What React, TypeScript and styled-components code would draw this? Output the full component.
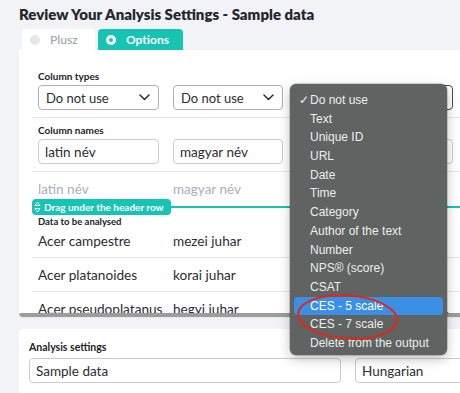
import * as React from "react";
import styled, { createGlobalStyle } from "styled-components";

const GlobalStyle = createGlobalStyle`
    html, body {
        margin: 0;
        overflow: hidden;
        background-color: #f2f3f7;
    }
    body {
        font-family: "Lato", "Noto Sans", sans-serif;
        color: #2b2d33;
    }
`;

const teal = "#17c3b2";
const columns = "121px 110px 156px 140px";

const Page = styled.div`
    position: relative;
    width: 620px;
    height: 393px;
    padding: 4px 0 0 19px;
    box-sizing: border-box;
`;

const Title = styled.h1`
    margin: 0 0 5px;
    font-size: 15px;
    line-height: 20px;
    font-weight: 800;
    color: #26282e;
`;

const Tabs = styled.div`
    display: flex;
    gap: 3px;
    margin-left: 3px;
    position: relative;
    z-index: 1;
`;

const Tab = styled.div<{ $active?: boolean; $width: number }>`
    display: flex;
    align-items: center;
    gap: 10px;
    width: ${(p) => p.$width}px;
    height: 21px;
    padding-left: 8px;
    box-sizing: border-box;
    border-radius: 4px 4px 0 0;
    background-color: ${(p) => (p.$active ? teal : "#ffffff")};
    color: ${(p) => (p.$active ? "#ffffff" : "#a3a8b3")};
    font-size: 12px;
    font-weight: ${(p) => (p.$active ? 700 : 600)};
`;

const Radio = styled.span<{ $active?: boolean }>`
    width: 10px;
    height: 10px;
    border-radius: 50%;
    box-sizing: border-box;
    background-color: ${(p) => (p.$active ? "#ffffff" : "#e5e7ec")};
    display: flex;
    align-items: center;
    justify-content: center;
    &::after {
        content: "";
        display: ${(p) => (p.$active ? "block" : "none")};
        width: 4px;
        height: 4px;
        border-radius: 50%;
        background-color: ${teal};
    }
`;

const Card = styled.div`
    background-color: #ffffff;
    border-radius: 0 4px 4px 4px;
    overflow: hidden;
    box-shadow: 0 1px 2px rgba(30, 40, 60, 0.05);
`;

const Viewport = styled.div`
    height: 243px;
    padding: 20px 0 0 13px;
    overflow: hidden;
`;

const Section = styled.div<{ $divider?: boolean; $top?: number }>`
    padding: ${(p) => p.$top ?? 0}px 6px ${(p) => (p.$divider ? 7 : 0)}px;
    border-bottom: ${(p) => (p.$divider ? "1px solid #e3e6ec" : "none")};
`;

const Label = styled.div<{ $size?: number; $gap?: number }>`
    font-size: ${(p) => p.$size ?? 10}px;
    line-height: 12px;
    font-weight: 700;
    color: #202228;
    margin-bottom: ${(p) => p.$gap ?? 3}px;
`;

const ColumnsGrid = styled.div`
    display: grid;
    grid-template-columns: ${columns};
    column-gap: 14px;
`;

const SelectBox = styled.div<{ $focused?: boolean }>`
    display: flex;
    align-items: center;
    justify-content: space-between;
    height: 25px;
    padding: 0 8px 0 7px;
    box-sizing: border-box;
    border: 1px solid ${(p) => (p.$focused ? "#4a4a4a" : "#aeb0b5")};
    border-radius: 4px;
    font-size: 13px;
    color: #2b2d33;
`;

const TextField = styled.div`
    display: flex;
    align-items: center;
    height: 25px;
    padding: 0 6px;
    box-sizing: border-box;
    border: 1px solid #c9ccd2;
    border-radius: 4px;
    font-size: 13.5px;
    color: #2b2d33;
    white-space: nowrap;
    overflow: hidden;
`;

const HeaderCell = styled.div`
    font-size: 13.5px;
    line-height: 18px;
    color: #a9afbb;
`;

const BadgeRow = styled.div`
    display: flex;
    align-items: center;
    height: 16px;
    margin: 1px -6px 1px;
`;

const Badge = styled.div`
    display: flex;
    align-items: center;
    gap: 3px;
    height: 16px;
    padding: 0 7px 0 2px;
    border-radius: 4px;
    background-color: ${teal};
    color: #ffffff;
    font-size: 10px;
    font-weight: 700;
    white-space: nowrap;
`;

const GuideLine = styled.div`
    flex: 1;
    height: 2.5px;
    background-color: ${teal};
`;

const DataLabel = styled(Label)`
    font-size: 9.5px;
    margin-bottom: -4px;
`;

const DataRow = styled(ColumnsGrid)`
    height: 33px;
    align-items: center;
    border-bottom: 1px solid #e3e6ec;
    margin: 0 -6px;
    padding: 0 6px;
`;

const DataCell = styled.div<{ $clip?: boolean }>`
    font-size: 13.6px;
    color: #2b2d33;
    white-space: nowrap;
    overflow: ${(p) => (p.$clip ? "hidden" : "visible")};
    text-overflow: ellipsis;
`;

const Scrollbar = styled.div`
    height: 4px;
    border-radius: 2px;
    background-color: #9c9c9c;
`;

const SettingsCard = styled.div`
    margin-top: 12px;
    padding: 12px 10px 14px;
    background-color: #ffffff;
    border-radius: 4px;
`;

const SettingsRow = styled.div`
    display: grid;
    grid-template-columns: 312px 200px;
    column-gap: 14px;
`;

const Menu = styled.div`
    position: absolute;
    left: 290px;
    top: 84px;
    width: 157px;
    padding: 7px 4px 2px;
    box-sizing: border-box;
    border-radius: 6px;
    background-color: #5f6361;
    box-shadow: 0 4px 12px rgba(0, 0, 0, 0.25), 0 0 0 0.5px rgba(0, 0, 0, 0.3);
    font-family: "Liberation Sans", Arial, sans-serif;
    font-size: 12px;
    color: #eceeed;
`;

const MenuItem = styled.div<{ $selected?: boolean }>`
    position: relative;
    height: 18.7px;
    line-height: 18.7px;
    padding-left: 16px;
    border-radius: 4px;
    background-color: ${(p) => (p.$selected ? "#3b8fe5" : "transparent")};
    color: ${(p) => (p.$selected ? "#ffffff" : "#eceeed")};
    white-space: nowrap;
`;

const Check = styled.span`
    position: absolute;
    left: 5px;
    top: 0;
`;

const Mark = styled.svg`
    position: absolute;
    left: 296px;
    top: 292px;
    overflow: visible;
`;

const Chevron = () => (
    <svg width="11" height="7" viewBox="0 0 11 7">
        <path d="M1 1l4.5 4.5L10 1" fill="none" stroke="#2b2d33" strokeWidth="1.5" strokeLinecap="round" strokeLinejoin="round" />
    </svg>
);

const DragIcon = () => (
    <svg width="7" height="12" viewBox="0 0 7 12">
        <path d="M3.5 1L6 4.5H1z M3.5 11L6 7.5H1z" fill="none" stroke="#ffffff" strokeWidth="1" strokeLinejoin="round" />
    </svg>
);

const menuItems = [
    "Do not use",
    "Text",
    "Unique ID",
    "URL",
    "Date",
    "Time",
    "Category",
    "Author of the text",
    "Number",
    "NPS® (score)",
    "CSAT",
    "CES - 5 scale",
    "CES - 7 scale",
    "Delete from the output",
];

const rows = [
    ["Acer campestre", "mezei juhar", "Field maple"],
    ["Acer platanoides", "korai juhar", "Norway maple, leaves"],
    ["Acer pseudoplatanus", "hegyi juhar", "Sycamore maple tree, planted in parks"],
];

const App: React.FC = () => {
    return (
        <Page>
            <GlobalStyle />
            <Title>Review Your Analysis Settings - Sample data</Title>
            <Tabs>
                <Tab $width={73}>
                    <Radio />
                    Plusz
                </Tab>
                <Tab $width={85} $active>
                    <Radio $active />
                    Options
                </Tab>
            </Tabs>
            <Card>
                <Viewport>
                    <Section $divider>
                        <Label>Column types</Label>
                        <ColumnsGrid>
                            <SelectBox>
                                Do not use
                                <Chevron />
                            </SelectBox>
                            <SelectBox>
                                Do not use
                                <Chevron />
                            </SelectBox>
                            <SelectBox $focused>
                                Do not use
                                <Chevron />
                            </SelectBox>
                            <SelectBox>
                                Do not use
                                <Chevron />
                            </SelectBox>
                        </ColumnsGrid>
                    </Section>
                    <Section $divider $top={6}>
                        <Label>Column names</Label>
                        <ColumnsGrid>
                            <TextField>latin név</TextField>
                            <TextField>magyar név</TextField>
                            <TextField>angol név</TextField>
                            <TextField>leírás</TextField>
                        </ColumnsGrid>
                    </Section>
                    <Section $top={8}>
                        <ColumnsGrid>
                            <HeaderCell>latin név</HeaderCell>
                            <HeaderCell>magyar név</HeaderCell>
                            <HeaderCell>angol név</HeaderCell>
                            <HeaderCell>leírás</HeaderCell>
                        </ColumnsGrid>
                        <BadgeRow>
                            <Badge>
                                <DragIcon />
                                Drag under the header row
                            </Badge>
                            <GuideLine />
                        </BadgeRow>
                        <DataLabel>Data to be analysed</DataLabel>
                        {rows.map((row) => (
                            <DataRow key={row[0]}>
                                <DataCell>{row[0]}</DataCell>
                                <DataCell>{row[1]}</DataCell>
                                <DataCell $clip>{row[2]}</DataCell>
                                <DataCell $clip>lombhullató fa</DataCell>
                            </DataRow>
                        ))}
                    </Section>
                </Viewport>
                <Scrollbar />
            </Card>
            <SettingsCard>
                <Label $size={10.5} $gap={5}>Analysis settings</Label>
                <SettingsRow>
                    <TextField>Sample data</TextField>
                    <TextField>Hungarian</TextField>
                </SettingsRow>
            </SettingsCard>
            <Menu>
                {menuItems.map((item, i) => (
                    <MenuItem key={item} $selected={item === "CES - 5 scale"}>
                        {i === 0 && <Check>✓</Check>}
                        {item}
                    </MenuItem>
                ))}
            </Menu>
            <Mark width="104" height="50" viewBox="0 0 104 50">
                <ellipse cx="51.5" cy="25" rx="49.5" ry="21.5" fill="none" stroke="#e3261c" strokeWidth="2" transform="rotate(4 51.5 25)" />
            </Mark>
        </Page>
    );
};

export default App;
